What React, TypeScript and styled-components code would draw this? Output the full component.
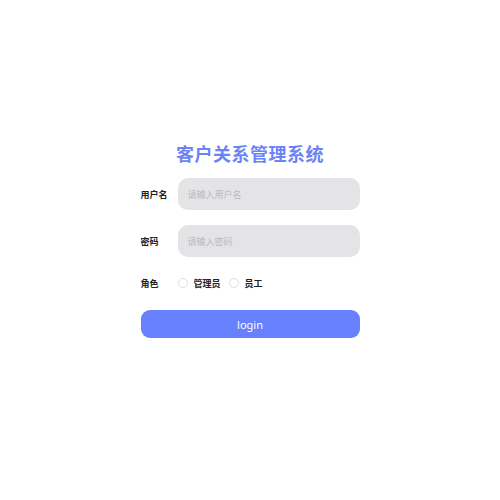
import React from "react";
import styled, { createGlobalStyle } from "styled-components";

const Global = createGlobalStyle`
  html, body { margin: 0; padding: 0; background: #fff; }
  body { font-family: "Noto Sans CJK SC", "Noto Sans", sans-serif; }
`;

const Page = styled.div`
  width: 500px;
  height: 500px;
  display: flex;
  justify-content: center;
  padding-top: 143px;
  box-sizing: border-box;
`;

const Form = styled.form`
  width: 219px;
  display: flex;
  flex-direction: column;
`;

const Title = styled.h1`
  margin: 0 0 15px;
  font-size: 18px;
  line-height: 20px;
  font-weight: 700;
  color: #6b83f6;
  text-align: center;
  letter-spacing: 0.5px;
`;

const Row = styled.div<{ $h: number; $mb: number }>`
  display: flex;
  align-items: center;
  height: ${(p) => p.$h}px;
  margin-bottom: ${(p) => p.$mb}px;
`;

const Label = styled.label`
  width: 37px;
  flex: none;
  font-size: 9px;
  font-weight: 700;
  color: #222;
`;

const Input = styled.input`
  flex: 1;
  height: 32px;
  box-sizing: border-box;
  border: none;
  border-radius: 10px;
  background: #e4e3e6;
  padding: 0 10px;
  font-size: 9px;
  font-family: inherit;
  outline: none;
  &::placeholder { color: #b9b9c2; }
`;

const RadioGroup = styled.div`
  display: flex;
  align-items: center;
`;

const RadioOpt = styled.label`
  display: flex;
  align-items: center;
  font-size: 9px;
  font-weight: 700;
  color: #222;
  margin-right: 8px;
`;

const Circle = styled.span`
  width: 8px;
  height: 8px;
  border-radius: 50%;
  border: 1px solid #dcdfe6;
  background: #fff;
  margin-right: 6px;
`;

const Button = styled.button`
  height: 28px;
  border: none;
  border-radius: 9px;
  background: #6780fd;
  color: #fff;
  font-family: "Noto Sans", sans-serif;
  font-size: 11px;
  cursor: pointer;
`;

export default function App() {
  return (
    <>
      <Global />
      <Page>
        <Form onSubmit={(e) => e.preventDefault()}>
          <Title>客户关系管理系统</Title>
          <Row $h={32} $mb={15}>
            <Label>用户名</Label>
            <Input placeholder="请输入用户名" />
          </Row>
          <Row $h={32} $mb={16}>
            <Label>密码</Label>
            <Input type="password" placeholder="请输入密码" />
          </Row>
          <Row $h={20} $mb={17}>
            <Label>角色</Label>
            <RadioGroup>
              <RadioOpt><Circle />管理员</RadioOpt>
              <RadioOpt><Circle />员工</RadioOpt>
            </RadioGroup>
          </Row>
          <Button type="submit">login</Button>
        </Form>
      </Page>
    </>
  );
}
